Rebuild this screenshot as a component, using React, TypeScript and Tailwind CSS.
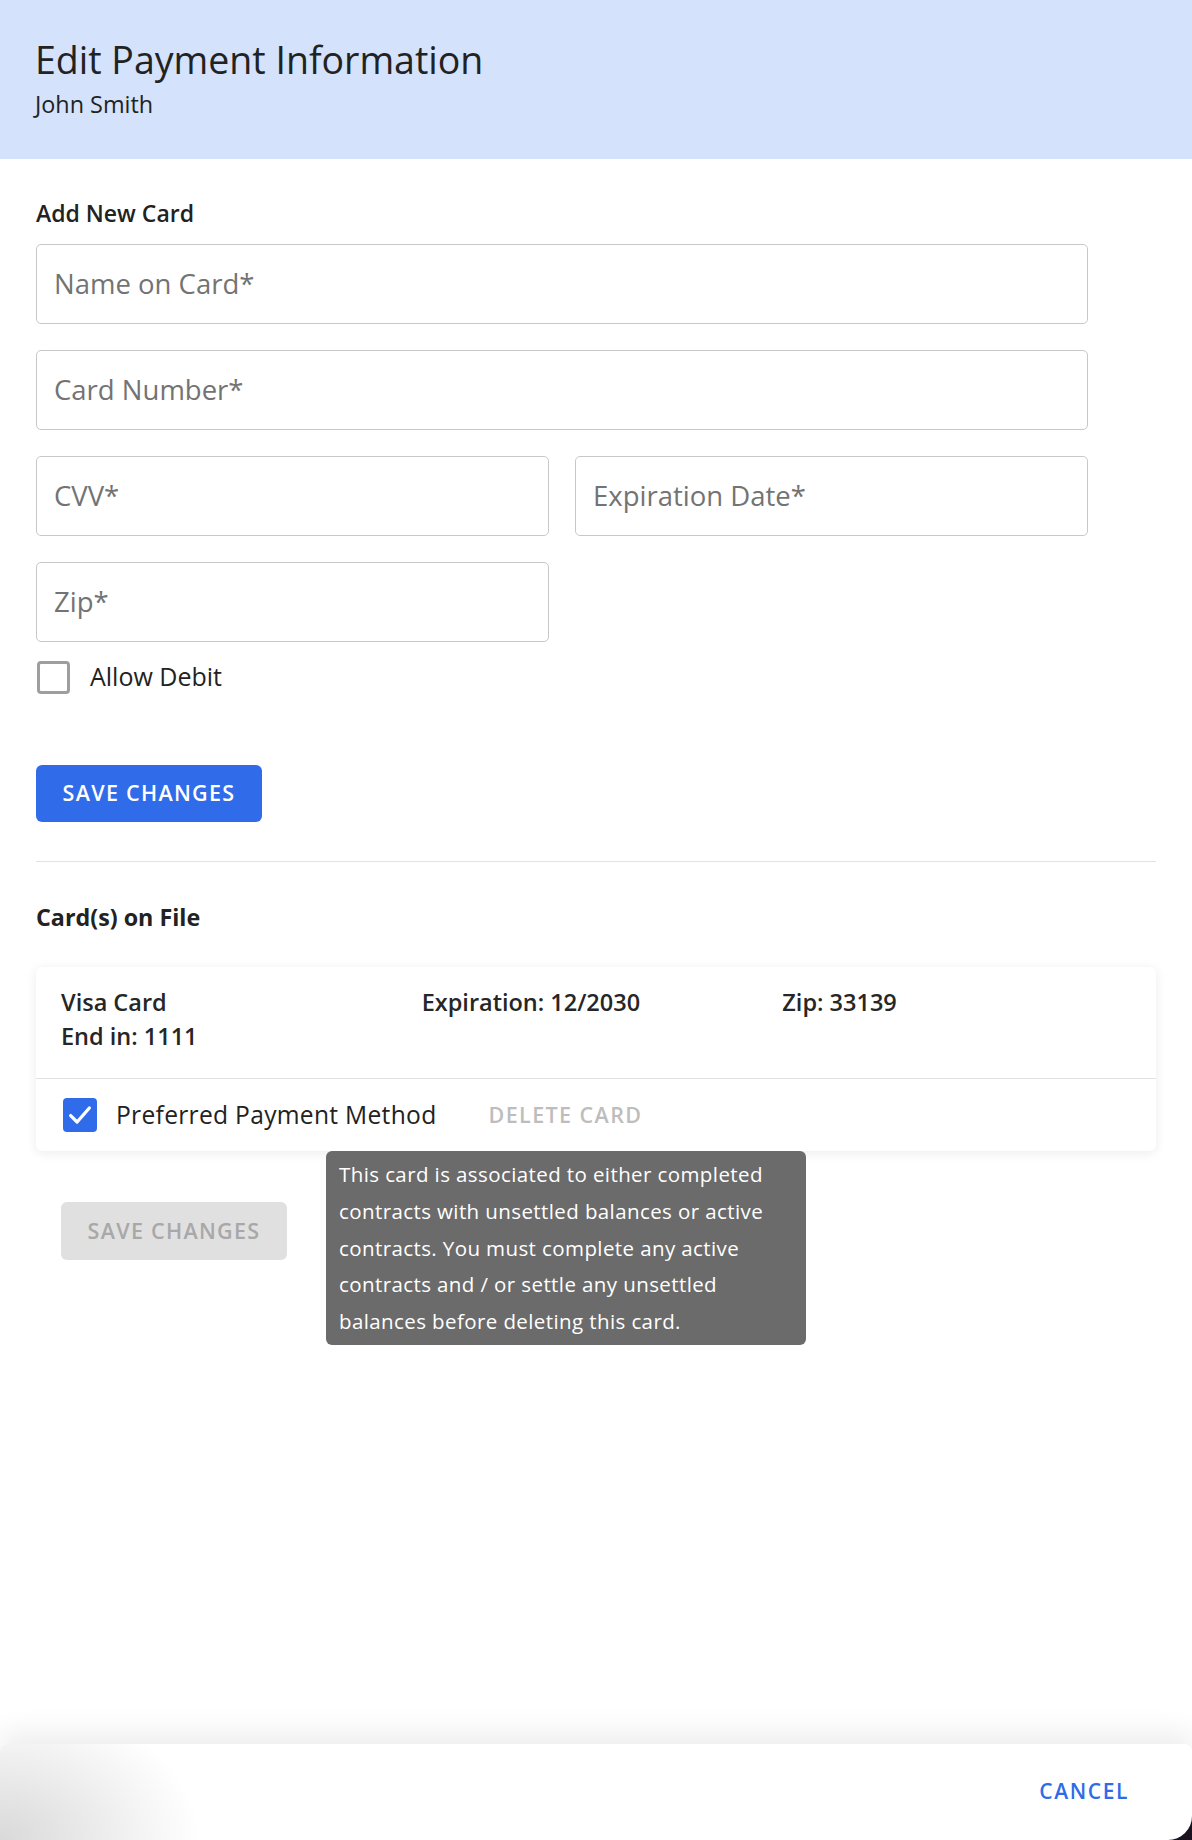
const font = "font-['Open_Sans','Noto_Sans',sans-serif]";

function Field({ label, className = "" }: { label: string; className?: string }) {
  return (
    <div
      className={`flex h-[80px] items-center rounded-[5px] border border-[#c8c8c8] px-[17px] text-[27.5px] text-[#737373] ${className}`}
    >
      {label}
    </div>
  );
}

export default function App() {
  return (
    <div className={`relative flex h-[1840px] w-[1192px] flex-col overflow-hidden bg-white ${font}`}>
      {/* Header */}
      <header className="h-[159px] shrink-0 bg-[#d4e2fb] px-[35px] pt-[38px]">
        <h1 className="text-[37.5px] leading-[44px] text-[#222]">Edit Payment Information</h1>
        <p className="mt-[7px] text-[23.4px] leading-[30px] text-[#222]">John Smith</p>
      </header>

      <main className="flex-1 px-[36px]">
        {/* Add new card */}
        <h2 className="mt-[39px] text-[23px] font-semibold leading-[30px] text-[#222]">Add New Card</h2>
        <div className="mt-[16px] flex w-[1052px] flex-col gap-[26px]">
          <Field label="Name on Card*" />
          <Field label="Card Number*" />
          <div className="grid grid-cols-2 gap-[26px]">
            <Field label="CVV*" />
            <Field label="Expiration Date*" />
          </div>
          <div className="grid grid-cols-2 gap-[26px]">
            <Field label="Zip*" />
          </div>
        </div>

        <label className="mt-[15px] flex h-[40px] items-center gap-[20px] pl-[1px]">
          <span className="h-[33px] w-[33px] rounded-[4px] border-[3px] border-[#9e9e9e]" />
          <span className="text-[25px] text-[#222]">Allow Debit</span>
        </label>

        <button className="mt-[68px] flex h-[57px] w-[226px] items-center justify-center rounded-[6px] bg-[#306be9] text-[21.5px] font-semibold tracking-[1.3px] text-white">
          SAVE CHANGES
        </button>

        <div className="mt-[39px] h-px w-full bg-[#e3e3e3]" />

        {/* Cards on file */}
        <h2 className="mt-[40px] text-[23.3px] font-bold leading-[30px] text-[#222]">Card(s) on File</h2>

        <div className="relative mt-[35px] rounded-[6px] bg-white shadow-[0_2px_12px_rgba(0,0,0,0.08)]">
          <div className="grid grid-cols-3 px-[25px] pb-[25px] pt-[18px] text-[23.5px] font-semibold leading-[34px] text-[#262626]">
            <div>
              <div>Visa Card</div>
              <div>End in: 1111</div>
            </div>
            <div className="pl-[4px]">Expiration: 12/2030</div>
            <div className="pl-[8px]">Zip: 33139</div>
          </div>
          <div className="h-px bg-[#e2e2e2]" />
          <div className="flex h-[72px] items-center pl-[27px]">
            <span className="flex h-[34px] w-[34px] items-center justify-center rounded-[4px] bg-[#306be9]">
              <svg width="28" height="28" viewBox="0 0 24 24" fill="none" stroke="white" strokeWidth="2.8" strokeLinecap="round" strokeLinejoin="round">
                <polyline points="4 12.5 9.5 18 20 6" />
              </svg>
            </span>
            <span className="ml-[19px] text-[24.6px] tracking-[0.3px] text-[#222]">Preferred Payment Method</span>
            <span className="ml-[52px] text-[21.5px] font-semibold tracking-[1.4px] text-[#bdbdbd]">DELETE CARD</span>
          </div>

          {/* Tooltip */}
          <div className="absolute left-[290px] top-full z-10 w-[480px] rounded-[6px] bg-[#6b6b6b] px-[13px] py-[5px] text-[20.5px] leading-[36.8px] tracking-[0.4px] text-white">
            This card is associated to either completed contracts with unsettled balances or active contracts. You must complete any active contracts and / or settle any unsettled balances before deleting this card.
          </div>
        </div>

        <button
          disabled
          className="ml-[25px] mt-[51px] flex h-[58px] w-[226px] items-center justify-center rounded-[6px] bg-[#e0e0e0] text-[21.5px] font-semibold tracking-[1.3px] text-[#a8a8a8]"
        >
          SAVE CHANGES
        </button>
      </main>

      {/* Footer actions */}
      <div className="relative h-[96px] shrink-0">
        <div className="absolute bottom-0 right-0 h-[26px] w-[26px] bg-[#1b1420]" />
        <footer className="relative z-10 flex h-full items-center justify-end rounded-t-[8px] rounded-br-[24px] bg-[radial-gradient(ellipse_200px_140px_at_0%_100%,#d9d9d9,#ffffff)] pr-[63px] shadow-[0_-12px_28px_rgba(0,0,0,0.07)]">
          <button className="text-[21px] font-semibold tracking-[1.6px] text-[#2f6be8]">CANCEL</button>
        </footer>
      </div>
    </div>
  );
}
